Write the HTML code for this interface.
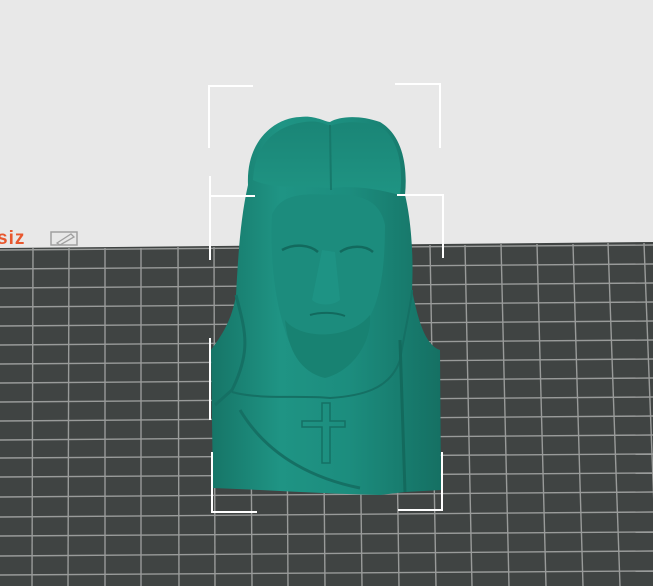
<!DOCTYPE html>
<html><head><style>
html,body{margin:0;padding:0;width:653px;height:586px;overflow:hidden;background:#e8e8e8;font-family:"Liberation Sans",sans-serif}
svg{position:absolute;left:0;top:0}
.t{position:absolute;left:-3px;top:228px;color:#e8572e;font-weight:bold;font-size:19px;letter-spacing:1px}
</style></head><body>
<svg width="653" height="586" viewBox="0 0 653 586">
<defs>
<linearGradient id="g" x1="0" y1="0" x2="1" y2="0">
<stop offset="0" stop-color="#167567"/><stop offset="0.3" stop-color="#1f9484"/><stop offset="0.6" stop-color="#1c8d7e"/><stop offset="1" stop-color="#157063"/></linearGradient>
<linearGradient id="h" x1="0" y1="0" x2="0" y2="1">
<stop offset="0" stop-color="#1a8576"/><stop offset="1" stop-color="#1f9483"/></linearGradient>
</defs>
<polygon points="0,248 653,242 653,586 0,586" fill="#404443"/>
<g stroke="#999b9a" stroke-width="1.4">
<line x1="0" y1="250" x2="653" y2="245"/>
<line x1="0" y1="269" x2="653" y2="264"/>
<line x1="0" y1="288" x2="653" y2="283"/>
<line x1="0" y1="307" x2="653" y2="302"/>
<line x1="0" y1="326" x2="653" y2="321"/>
<line x1="0" y1="345" x2="653" y2="340"/>
<line x1="0" y1="364" x2="653" y2="359"/>
<line x1="0" y1="383" x2="653" y2="378"/>
<line x1="0" y1="402" x2="653" y2="397"/>
<line x1="0" y1="421" x2="653" y2="416"/>
<line x1="0" y1="440" x2="653" y2="435"/>
<line x1="0" y1="458" x2="653" y2="454"/>
<line x1="0" y1="477" x2="653" y2="473"/>
<line x1="0" y1="497" x2="653" y2="492"/>
<line x1="0" y1="517" x2="653" y2="512"/>
<line x1="0" y1="536" x2="653" y2="532"/>
<line x1="0" y1="556" x2="653" y2="551"/>
<line x1="0" y1="575" x2="653" y2="571"/>
<line x1="33" y1="248" x2="32" y2="586"/>
<line x1="69" y1="248" x2="68" y2="586"/>
<line x1="105" y1="248" x2="105" y2="586"/>
<line x1="141" y1="248" x2="141" y2="586"/>
<line x1="178" y1="247" x2="179" y2="586"/>
<line x1="214" y1="247" x2="215" y2="586"/>
<line x1="250" y1="247" x2="252" y2="586"/>
<line x1="286" y1="246" x2="288" y2="586"/>
<line x1="322" y1="246" x2="325" y2="586"/>
<line x1="358" y1="246" x2="362" y2="586"/>
<line x1="394" y1="245" x2="399" y2="586"/>
<line x1="430" y1="245" x2="436" y2="586"/>
<line x1="465" y1="245" x2="472" y2="586"/>
<line x1="501" y1="244" x2="509" y2="586"/>
<line x1="537" y1="244" x2="546" y2="586"/>
<line x1="573" y1="244" x2="583" y2="586"/>
<line x1="608" y1="243" x2="620" y2="586"/>
<line x1="644" y1="243" x2="657" y2="586"/>
</g>
<path d="M51,232 h26 v13 h-26 z" fill="none" stroke="#a0a0a0" stroke-width="1.5"/>
<path d="M57,243 l14,-9 l3,3 l-14,8 z" fill="none" stroke="#a0a0a0" stroke-width="1.3"/>
<!-- bust -->
<path d="M248,185 C246,140 275,118 300,117 C315,115 325,122 330,122 C340,116 360,115 380,122 C402,135 408,165 405,195 C410,215 414,250 412,290 C418,320 425,345 440,350 L441,490 L405,492 L380,495 C340,494 300,492 260,490 L213,488 L211,350 C222,335 232,320 236,295 C238,260 240,220 248,185 Z" fill="url(#g)"/>
<path d="M253,180 C255,140 280,125 305,122 C320,120 326,125 330,126 C345,120 370,121 385,130 C400,145 403,170 400,195 C380,190 360,185 330,188 C300,185 275,190 253,180 Z" fill="url(#h)"/>
<path d="M272,215 C280,195 300,193 330,195 C360,193 380,200 385,225 C385,270 380,300 368,320 C360,345 345,365 325,370 C305,368 290,350 285,330 C275,300 270,260 272,215 Z" fill="#1c8c7d"/>
<path d="M285,320 C300,340 350,340 370,315 C372,345 350,372 325,378 C300,372 288,350 285,320 Z" fill="#188272"/>
<path d="M322,250 L335,252 L340,300 C333,306 318,306 312,300 Z" fill="#1e9384"/>
<path d="M282,250 C295,243 310,245 318,252 M340,252 C350,245 365,245 373,252" stroke="#126a5e" stroke-width="2.5" fill="none"/>
<path d="M310,315 C320,312 335,312 345,316" stroke="#126a5e" stroke-width="2" fill="none"/>
<path d="M330,125 L331,190" stroke="#17796b" stroke-width="2"/>
<path d="M236,295 C245,330 252,350 232,390 L215,405" stroke="#157064" stroke-width="3" fill="none"/>
<path d="M232,392 C260,400 300,395 330,398 C360,396 390,390 400,360 C405,330 412,300 412,290" stroke="#157064" stroke-width="2" fill="none"/>
<path d="M400,340 L405,492" stroke="#136a5d" stroke-width="3"/>
<path d="M240,410 C270,460 320,480 360,488" stroke="#157064" stroke-width="3" fill="none"/>
<path d="M322,403 h8 v18 h15 v6 h-15 v36 h-8 v-36 h-20 v-6 h20 z" fill="none" stroke="#157064" stroke-width="1.5"/>
<g stroke="#ffffff" stroke-width="2" fill="none">
<path d="M253,86 H209 V148"/>
<path d="M395,84 H440 V148"/>
<path d="M255,196 H211 M210,176 V260"/>
<path d="M397,195 H443 V258"/>
<path d="M210,338 V420"/>
<path d="M212,452 V512 H257"/>
<path d="M442,452 V510 H398"/>
</g>
</svg>
<div class="t">siz</div>
</body></html>
